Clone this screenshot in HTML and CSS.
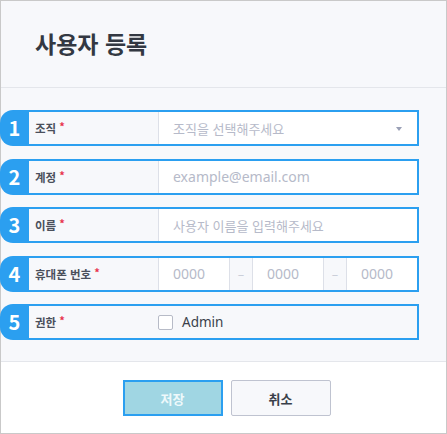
FILE: index.html
```html
<!DOCTYPE html>
<html lang="ko">
<head>
<meta charset="utf-8">
<title>사용자 등록</title>
<link rel="stylesheet" href="styles.css">
</head>
<body>
<div class="dialog">
  <header class="dlg-head"><h1 class="dlg-title">사용자 등록</h1></header>
  <div class="dlg-body">
    <div class="row">
      <span class="num">1</span>
      <div class="box">
        <div class="lbl">조직<span class="req">*</span></div>
        <div class="field select"><span class="ph">조직을 선택해주세요</span><span class="caret"></span></div>
      </div>
    </div>
    <div class="row">
      <span class="num">2</span>
      <div class="box">
        <div class="lbl">계정<span class="req">*</span></div>
        <div class="field"><span class="ph lat">example@email.com</span></div>
      </div>
    </div>
    <div class="row">
      <span class="num">3</span>
      <div class="box">
        <div class="lbl">이름<span class="req">*</span></div>
        <div class="field"><span class="ph">사용자 이름을 입력해주세요</span></div>
      </div>
    </div>
    <div class="row">
      <span class="num">4</span>
      <div class="box">
        <div class="lbl">휴대폰 번호<span class="req">*</span></div>
        <div class="phone">
          <div class="field seg"><span class="ph lat">0000</span></div>
          <span class="dash">–</span>
          <div class="field seg"><span class="ph lat">0000</span></div>
          <span class="dash">–</span>
          <div class="field seg"><span class="ph lat">0000</span></div>
        </div>
      </div>
    </div>
    <div class="row">
      <span class="num">5</span>
      <div class="box">
        <div class="lbl">권한<span class="req">*</span></div>
        <label class="check"><span class="cbox"></span><span class="ctext">Admin</span></label>
      </div>
    </div>
  </div>
  <footer class="dlg-foot">
    <button class="btn btn-save">저장</button>
    <button class="btn btn-cancel">취소</button>
  </footer>
</div>
</body>
</html>
```
FILE: styles.css
```css
* { box-sizing: border-box; }
html, body { margin: 0; padding: 0; }
body {
  font-family: "Noto Sans CJK KR", "Noto Sans", sans-serif;
  background: #ffffff;
}
.dialog {
  width: 447px;
  height: 434px;
  border: 1px solid #c9c9c9;
  display: flex;
  flex-direction: column;
  background: #ffffff;
}
.dlg-head {
  height: 87px;
  flex: none;
  border-bottom: 1px solid #e4e6eb;
  background: #f7f8fb;
  display: flex;
  align-items: center;
  padding: 0 0 0 34px;
}
.dlg-title {
  margin: 0 0 2px 0;
  font-size: 23px;
  font-weight: 700;
  color: #333842;
  letter-spacing: 0;
}
.dlg-body {
  height: 273px;
  flex: none;
  background: #f7f8fb;
  padding-top: 22px;
  display: flex;
  flex-direction: column;
  gap: 12.5px;
}
.row {
  display: flex;
  width: 419px;
  height: 36px;
  margin-left: -1px;
}
.num {
  width: 29px;
  flex: none;
  background: #2b9ff0;
  border-radius: 13px 0 0 13px;
  color: #ffffff;
  font-size: 20px;
  font-weight: 700;
  display: flex;
  align-items: center;
  justify-content: center;
  padding-bottom: 1px;
}
.box {
  flex: 1;
  display: flex;
  border: 2px solid #2b9ff0;
  border-left: none;
  background: #f7f8fb;
}
.lbl {
  width: 129px;
  flex: none;
  padding-left: 6px;
  display: flex;
  align-items: center;
  font-size: 11.5px;
  font-weight: 700;
  color: #4b505c;
}
.req {
  color: #e8344e;
  font-size: 11px;
  margin-left: 3px;
  position: relative;
  top: -2px;
}
.field {
  flex: 1;
  background: #ffffff;
  border-left: 1px solid #dde0e8;
  display: flex;
  align-items: center;
  padding-left: 14px;
}
.ph {
  font-size: 13px;
  font-weight: 400;
  color: #b6bac9;
}
.ph.lat {
  font-family: "Noto Sans", "Open Sans", sans-serif;
  font-size: 14px;
}
.select { justify-content: space-between; padding-right: 15px; }
.caret {
  width: 0;
  height: 0;
  border-left: 3px solid transparent;
  border-right: 3px solid transparent;
  border-top: 4px solid #9aa0b6;
  margin-top: 1px;
}
.phone {
  flex: 1;
  display: flex;
}
.seg { border-right: 1px solid #dde0e8; }
.seg:last-child { border-right: none; }
.dash {
  width: 22px;
  flex: none;
  display: flex;
  align-items: center;
  justify-content: center;
  color: #c2c6d2;
  font-size: 12px;
}
.check {
  display: flex;
  align-items: center;
}
.cbox {
  width: 15px;
  height: 15px;
  border: 1px solid #b7bbc7;
  border-radius: 2px;
  background: #ffffff;
}
.ctext {
  margin-left: 9px;
  font-family: "Noto Sans", "Noto Sans CJK KR", sans-serif;
  font-size: 13.5px;
  color: #3a3f4a;
}
.dlg-foot {
  flex: 1;
  border-top: 1px solid #e4e6eb;
  background: #ffffff;
  display: flex;
  justify-content: center;
  align-items: flex-start;
  gap: 8px;
  padding: 18px 0 0 6px;
}
.btn {
  width: 100px;
  height: 36px;
  font-family: inherit;
  font-size: 13px;
  font-weight: 700;
  border-radius: 2px;
  padding: 0;
  cursor: pointer;
}
.btn-save {
  background: #a0d6e3;
  border: 2px solid #2b9ff0;
  color: #eef9fb;
  border-radius: 0;
}
.btn-cancel {
  background: #f7f8fb;
  border: 1px solid #bfc3d0;
  color: #3a3f4a;
}
```
